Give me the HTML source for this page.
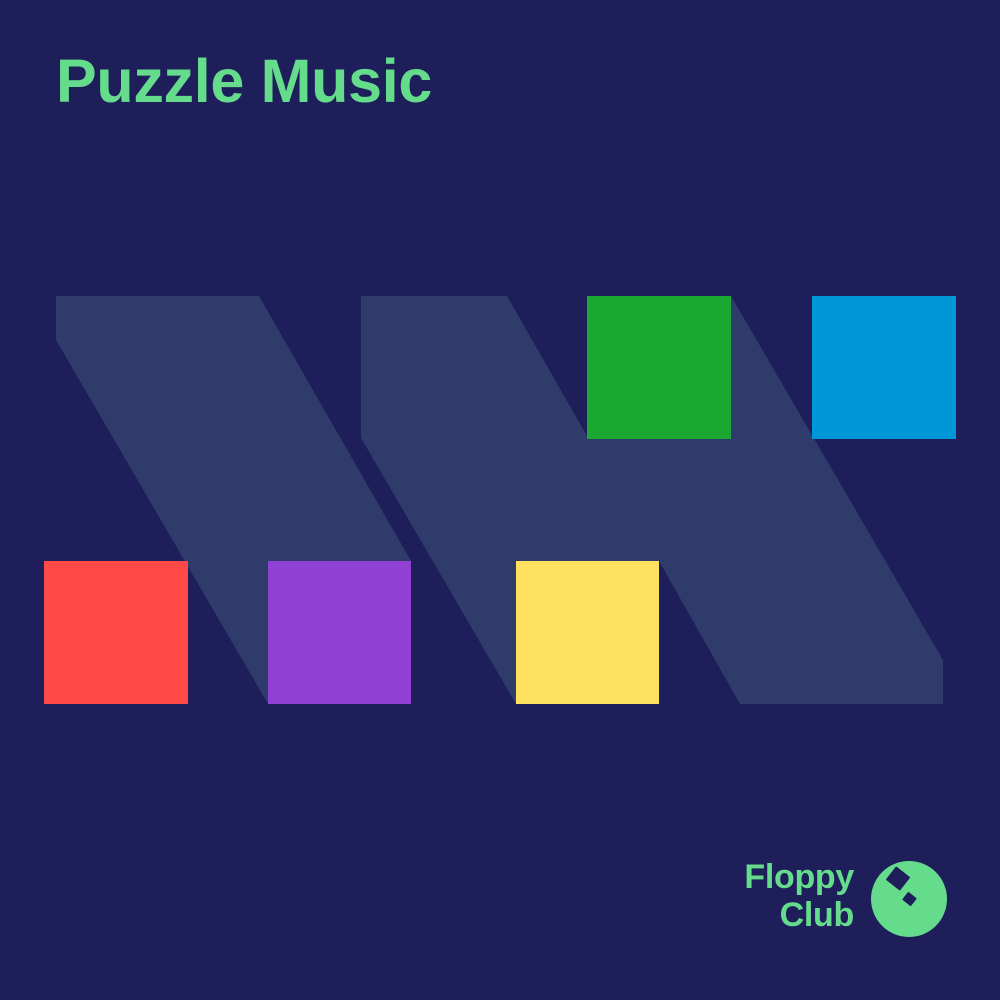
<!DOCTYPE html>
<html><head><style>
html,body{margin:0;padding:0;background:#1e1e5a;}
.t{position:absolute;font-family:"Liberation Sans",sans-serif;font-weight:bold;color:#64dc8c;}
</style></head><body>
<div style="position:relative;width:1000px;height:1000px;overflow:hidden;background:#1e1e5a">
<div class="t" style="left:56px;top:46px;font-size:61px;letter-spacing:-0.3px">Puzzle Music</div>
<svg width="1000" height="1000" style="position:absolute;left:0;top:0">
<polygon points="56,296 259,296 411,561 411,704 268,704 56,340" fill="#2f3b6a"/>
<polygon points="361,296 507,296 587,436 587,439 731,439 731,296 943,660 943,704 740,704 659,561 516,561 516,704 361,438" fill="#2f3b6a"/>
<rect x="587" y="296" width="144" height="143" fill="#1aa833"/>
<rect x="812" y="296" width="144" height="143" fill="#0097d8"/>
<rect x="44" y="561" width="144" height="143" fill="#ff4a47"/>
<rect x="268" y="561" width="143" height="143" fill="#9140d4"/>
<rect x="516" y="561" width="143" height="143" fill="#ffe160"/>
<circle cx="909" cy="899" r="38" fill="#64dc8c"/>
<rect x="889" y="870" width="18" height="17" rx="1" transform="rotate(38 898 878.5)" fill="#1e1e5a"/>
<rect x="904" y="894" width="11" height="10" rx="1" transform="rotate(38 909.5 899)" fill="#1e1e5a"/>
</svg>
<div class="t" style="right:146px;top:858px;font-size:34px;line-height:38px;text-align:right;letter-spacing:-0.3px">Floppy<br>Club</div>
</div>
</body></html>
